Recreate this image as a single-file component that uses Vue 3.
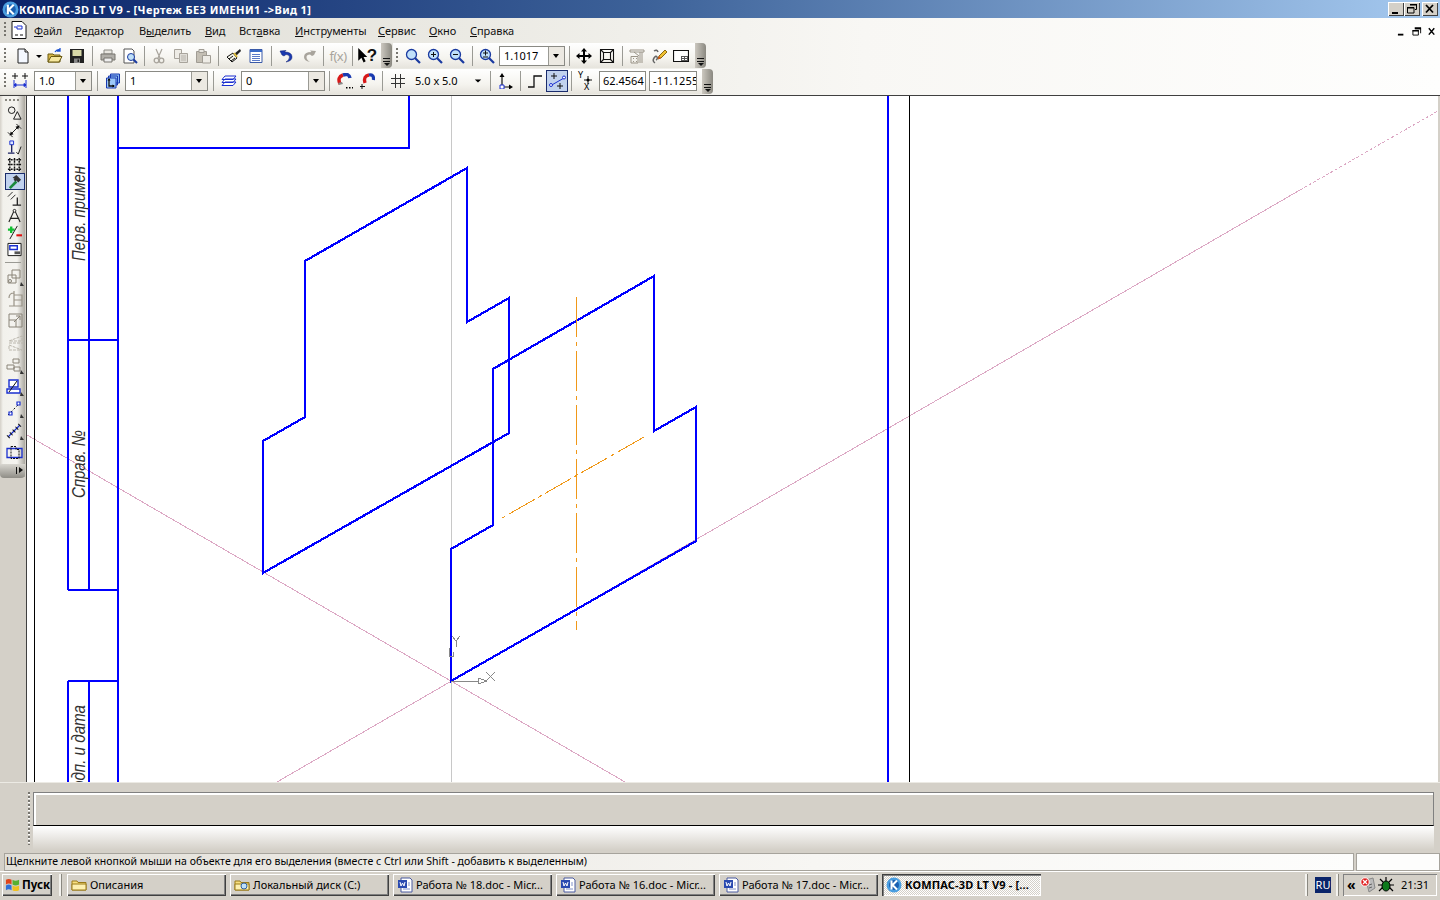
<script setup>
const menu = [
  ['', 'Ф', 'айл', 'm1'], ['', 'Р', 'едактор', 'm2'], ['В', 'ы', 'делить', 'm3'], ['', 'В', 'ид', 'm4'],
  ['Вст', 'а', 'вка', 'm5'], ['', 'И', 'нструменты', 'm6'], ['', 'С', 'ервис', 'm7'], ['', 'О', 'кно', 'm8'], ['', 'С', 'правка', 'm9']
]
const docs = ['Работа № 18.doc - Micr...', 'Работа № 16.doc - Micr...', 'Работа № 17.doc - Micr...']
</script>

<template>
  <div class="app">
    <header class="title">
      <svg class="logo" viewBox="0 0 16 16"><circle cx="8" cy="8" r="7.500" fill="#4a9ee0"/><circle cx="8" cy="8" r="5" fill="#1a5fb0"/><path d="M5.500 3.500v9M11 3.500 6.500 8l4.500 4.500" stroke="#fff" stroke-width="2" fill="none"/></svg>
      <span class="title-text">КОМПАС-3D LT V9 - [Чертеж БЕЗ ИМЕНИ1 -&gt;Вид 1]</span>
      <div class="win-btns">
        <button class="wb"><svg viewBox="0 0 14 12"><path d="M3 9h6v2H3z"/></svg></button>
        <button class="wb"><svg viewBox="0 0 14 12"><path d="M5 1.500h6.500v5H10M2.500 4.500H9v5.500H2.500z" fill="none" stroke="#000"/><path d="M5 1h7v1.500H5zM2 4h7v1.500H2z"/></svg></button>
        <button class="wb wb-gap"><svg viewBox="0 0 14 12"><path d="m3 2 7 7.500M10 2 3 9.500" stroke="#000" stroke-width="1.800"/></svg></button>
      </div>
    </header>

    <div class="dock">
      <div class="menubar">
        <i class="grip grip-menu"></i>
        <svg class="doc-ic" viewBox="0 0 16 18"><path d="M1 .5h10l4 4v13H1z" fill="#fff" stroke="#111"/><path d="M3 6h3v2h5M6 5h5v3" fill="none" stroke="#1a2fd0"/><path d="M4 14h3M9 14h3" stroke="#111"/></svg>
        <span v-for="m in menu" :key="m[3]" class="menu-item" :class="m[3]">{{ m[0] }}<u>{{ m[1] }}</u>{{ m[2] }}</span>
        <div class="mdi-btns">
          <svg viewBox="0 0 44 12"><path d="M1 9h6v2H1z"/><path d="M20 3.500h6v5M17.500 5.500h6v5h-6z" fill="none" stroke="#000"/><path d="M19.500 2h7v2h-7zM17 5h7v1.500h-7z"/><path d="m35 3 6 7M41 3l-6 7" stroke="#000" stroke-width="1.600"/></svg>
        </div>
      </div>

      <div class="row row1">
        <div class="bar bar-a">
          <i class="grip"></i>
          <span class="spc3"></span>
          <span class="ic"><svg viewBox="0 0 16 16"><path d="M3 1h7l3 3v11H3z" fill="#f4f8ff" stroke="#222"/><path d="M10 1v3h3" fill="#ddd" stroke="#222"/></svg></span>
          <span class="mini"><svg viewBox="0 0 10 16"><path d="m2 7 3 3 3-3z"/></svg></span>
          <span class="ic"><svg viewBox="0 0 16 16"><path d="M1 6h5l1 1h6v7H1z" fill="#d8b848" stroke="#6a5a10"/><path d="M1 14 4 8.500h11L12 14z" fill="#f6e8a0" stroke="#6a5a10"/><path d="M8 4q2-3 5-2M13 0v3h-3" fill="none" stroke="#1a50d0" stroke-width="1.300"/></svg></span>
          <span class="ic"><svg viewBox="0 0 16 16"><path d="M1 1h14v14H1z" fill="#222"/><path d="M3.500 2h9v6h-9z" fill="#d8d8a8"/><path d="M5 10.500h6V15H5z" fill="#888"/><path d="M8.500 11.500h1.500v2.500H8.500z" fill="#222"/></svg></span>
          <i class="sep s9"></i>
          <span class="ic gray"><svg viewBox="0 0 16 16"><path d="M4 2h8v4H4z" fill="#e8e6e0" stroke="#8a8a84"/><path d="M1 6h14v6H1z" fill="#b0aea8" stroke="#77756f"/><path d="M4 10h8v4H4z" fill="#eee" stroke="#77756f"/></svg></span>
          <span class="ic"><svg viewBox="0 0 16 16"><path d="M2 1h8l2 2v12H2z" fill="#fff" stroke="#555"/><circle cx="9" cy="9" r="3.500" fill="#bfe0f8" stroke="#1a3aa0"/><path d="m11.500 11.500 3.500 3.500" stroke="#1a3aa0" stroke-width="2"/></svg></span>
          <i class="sep s7"></i>
          <span class="ic"><svg viewBox="0 0 16 16"><path d="M5 1l4 9M11 1 7 10" stroke="#a8a49c" fill="none" stroke-width="1.200"/><circle cx="5.500" cy="12.500" r="2.300" fill="none" stroke="#a8a49c" stroke-width="1.300"/><circle cx="10.500" cy="12.500" r="2.300" fill="none" stroke="#a8a49c" stroke-width="1.300"/></svg></span>
          <span class="ic"><svg viewBox="0 0 16 16"><path d="M1.500 1.500h7v9h-7z" fill="#eeece6" stroke="#a8a49c"/><path d="M6.500 5.500h8v9h-8z" fill="#e0ded8" stroke="#a8a49c"/><path d="M8 8h5M8 10h5M8 12h5" stroke="#b8b4ac"/></svg></span>
          <span class="ic"><svg viewBox="0 0 16 16"><path d="M1.500 3.500h10v11h-10z" fill="#c4bfb4" stroke="#a09c94"/><path d="M4 1.500h5v3H4z" fill="#e8e6e0" stroke="#a09c94"/><path d="M7.500 7.500h8v7.500h-8z" fill="#eeece6" stroke="#a09c94"/></svg></span>
          <i class="sep s9"></i>
          <span class="ic"><svg viewBox="0 0 16 16"><path d="m1 9 6-4 4 5-5 4z" fill="#f4f4e8" stroke="#111"/><path d="m3 11 4-3M5 13l4-3" stroke="#111"/><path d="m8 6 6-5 1 2-5 5z" fill="#222"/><path d="m8 5 3 4" stroke="#e0c040" stroke-width="2"/></svg></span>
          <span class="ic"><svg viewBox="0 0 16 16"><path d="M2 1.500h12v13H2z" fill="#fff" stroke="#3a5aa8"/><path d="M2 2h12v2H2z" fill="#3a6ac8"/><path d="M4 6.500h8M4 8.500h8M4 10.500h8M4 12.500h8" stroke="#5a7ac8"/></svg></span>
          <i class="sep s9"></i>
          <span class="ic"><svg viewBox="0 0 16 16"><path d="M3 7 1 3l6-.500-1.500 1.500Q13 4 13 9q0 4-6 5 3.500-2 3.500-5 0-2.500-3.500-2.500L5 8z" fill="#1a3ab0" stroke="#0a1a70" stroke-width=".5"/></svg></span>
          <span class="ic"><svg viewBox="0 0 16 16"><path d="m13 7 2-4-6-.500 1.500 1.500Q3 4 3 9q0 4 6 5-3.500-2-3.500-5 0-2.500 3.500-2.500L11 8z" fill="#a8a49c"/></svg></span>
          <i class="sep s7"></i>
          <span class="ic fx">f(x)</span>
          <i class="sep s7"></i>
          <span class="ic help"><svg viewBox="0 0 10 16"><path d="M1 1v12l3-3 2 4.500 2-1-2-4h3.500z" fill="#000"/></svg><b>?</b></span>
        </div>
        <i class="chev"><b></b></i>

        <div class="bar bar-b">
          <i class="grip"></i>
          <span class="spc3"></span>
          <span class="ic"><svg viewBox="0 0 16 16"><circle cx="6.500" cy="6.500" r="5" fill="#c0e0fa" stroke="#1a3aa0" stroke-width="1.300"/><path d="m10 10 5 5" stroke="#1a3aa0" stroke-width="2.200"/></svg></span>
          <span class="ic"><svg viewBox="0 0 16 16"><circle cx="6.500" cy="6.500" r="5" fill="#c0e0fa" stroke="#1a3aa0" stroke-width="1.300"/><path d="M4 6.500h5M6.500 4v5" stroke="#111"/><path d="m10 10 5 5" stroke="#1a3aa0" stroke-width="2.200"/></svg></span>
          <span class="ic"><svg viewBox="0 0 16 16"><circle cx="6.500" cy="6.500" r="5" fill="#c0e0fa" stroke="#1a3aa0" stroke-width="1.300"/><path d="M4 6.500h5" stroke="#111"/><path d="m10 10 5 5" stroke="#1a3aa0" stroke-width="2.200"/></svg></span>
          <i class="sep"></i>
          <span class="ic"><svg viewBox="0 0 16 16"><circle cx="6.500" cy="6.500" r="5" fill="#c0e0fa" stroke="#1a3aa0" stroke-width="1.300"/><path d="M4 5h5M6.500 2.500v5M4 9h5" stroke="#111"/><path d="m10 10 5 5" stroke="#1a3aa0" stroke-width="2.200"/></svg></span>
          <span class="spc1"></span>
          <div class="combo c66"><span>1.1017</span><em></em></div>
          <i class="sep"></i>
          <span class="ic"><svg viewBox="0 0 16 16"><path d="M8 0 5 3.500h2V7H3.500V5L0 8l3.500 3V9H7v3.500H5L8 16l3-3.500H9V9h3.500v2L16 8l-3.500-3v2H9V3.500h2z"/></svg></span>
          <span class="spc1"></span>
          <span class="ic"><svg viewBox="0 0 16 16"><path d="M1.500 1.500h13v13h-13zM4.500 4.500h7v7h-7zM1.500 1.500l3 3M14.500 1.500l-3 3M1.500 14.500l3-3M14.500 14.500l-3-3" fill="none" stroke="#111" stroke-width="1.100"/></svg></span>
          <i class="sep"></i>
          <span class="ic"><svg viewBox="0 0 16 16"><path d="M1 2h14v2H1zM11 4v11M13 4v11M2 8.500h7v6.500H2z" fill="none" stroke="#9a9488"/><path d="M4 10h1v1H4zM7 10h1v1H7zM4 13h1v1H4zM7 13h1v1H7z" fill="#9a9488"/><path d="m5 4 5 4" stroke="#9a9488"/></svg></span>
          <span class="ic"><svg viewBox="0 0 16 16"><path d="M4 15q-3-2-1-5t3-1-1 3M3 3q3-2 4 1" fill="none" stroke="#666" stroke-width="1.500"/><path d="m7 11 1-3 6-6 2 2-6 6z" fill="#f0c030" stroke="#8a6a10"/><path d="m7 11 1-3 2 2z" fill="#e05020"/></svg></span>
          <span class="ic"><svg viewBox="0 0 16 16"><path d="M.5 2.500h15v11H.5z" fill="#fff" stroke="#111" stroke-width="1.200"/><path d="M8 8h7v5H8z" fill="#555"/><path d="M9 9h2v1H9zM12 9h2v1h-2zM9 11h2v1H9zM12 11h2v1h-2z" fill="#fff"/></svg></span>
        </div>
        <i class="chev"><b></b></i>
      </div>

      <div class="row row2">
        <div class="bar bar-c">
          <i class="grip"></i>
          <span class="ic"><svg viewBox="0 0 16 16"><path d="M3 0v6M0 3h6M13 0v6M10 3h6" stroke="#111"/><path d="M2 7v8M14 7v8M2 12h12M2 12l2-1.500v3zM14 12l-2-1.500v3z" stroke="#1a2fd0" fill="#1a2fd0"/></svg></span>
          <span class="spc3"></span>
          <div class="combo c58"><span>1.0</span><em></em></div>
          <i class="sep s10"></i>
          <span class="ic"><svg viewBox="0 0 16 16"><path d="M5.500 1h9v9h-9zM3.500 3h9v9h-9z" fill="#88b8f0" stroke="#1a3ab0"/><path d="M1.500 5h9.500v10H1.500z" fill="#9cc8f8" stroke="#1a3ab0"/><path d="M4 6.500V13h5" fill="none" stroke="#111" stroke-width="1.300"/><path d="m4 5 1.500 2.500h-3zM10 13l-2.500-1.500v3z"/></svg></span>
          <span class="spc1"></span>
          <div class="combo c83"><span>1</span><em></em></div>
          <i class="sep s10"></i>
          <span class="ic"><svg viewBox="0 0 16 16"><path d="M4 3h11l-3 3.500H1zM4 6h11l-3 3.500H1zM4 9h11l-3 3.500H1z" fill="#fff" stroke="#1a2fd0"/></svg></span>
          <span class="spc1"></span>
          <div class="combo c84"><span>0</span><em></em></div>
          <i class="sep s9"></i>
          <span class="ic"><svg viewBox="0 0 16 16"><path d="M3 11Q0 4 6 2" fill="none" stroke="#d81818" stroke-width="3.500"/><path d="M6 2q6-2 7 3" fill="none" stroke="#1a3ab0" stroke-width="3.500"/><path d="m1 10 4-1 1 2-4 1z" fill="#888"/><path d="M9 14h1.500v1.500H9zM12 14h1.500v1.500H12zM15 14h1v1.500h-1z"/></svg></span>
          <span class="ic"><svg viewBox="0 0 16 16"><path d="M6 10Q4 3 10 2" fill="none" stroke="#d81818" stroke-width="3.300"/><path d="M10 2q5-1 4.500 5" fill="none" stroke="#1a3ab0" stroke-width="3.300"/><path d="M3 11v5M1 13.500h5" stroke="#111"/></svg></span>
          <i class="sep s9"></i>
          <span class="ic"><svg viewBox="0 0 16 16"><path d="M5.500 1v14M10.500 1v14M1 5.500h14M1 10.500h14" stroke="#333"/></svg></span>
          <span class="grid-txt">5.0 x 5.0</span>
          <span class="arrow-only"><svg viewBox="0 0 10 10"><path d="m1 3 4 4 4-4z"/></svg></span>
          <i class="sep"></i>
          <span class="ic"><svg viewBox="0 0 16 16"><path d="M5 14V3M5 14h9" stroke="#111" stroke-width="1.200"/><path d="m5 0 2.500 4h-5zM16 14l-4-2.500v5z"/><path d="M3 12h4v4H3z" fill="#fff" stroke="#1a2fd0"/></svg></span>
          <i class="sep"></i>
          <span class="ic"><svg viewBox="0 0 16 16"><path d="M1 14h6V3h8" fill="none" stroke="#111" stroke-width="1.300"/></svg></span>
          <span class="ic active"><svg viewBox="0 0 18 18"><path d="M6 1v6M3 4h6M12 11v6M9 14h6" stroke="#111"/><path d="m2 14 14-8" stroke="#1a2fd0"/><circle cx="3" cy="13" r="1.500" fill="#fff" stroke="#1a2fd0"/><circle cx="16" cy="5.500" r="1.500" fill="#fff" stroke="#1a2fd0"/></svg></span>
          <i class="sep s7"></i>
          <span class="ic yx"><small>Y</small><svg viewBox="0 0 8 8"><path d="M4 0v8M0 4h8" stroke="#111"/><circle cx="4" cy="4" r="1.500"/></svg><small class="x">X</small></span>
          <span class="spc2"></span>
          <div class="field f47">62.4564</div>
          <span class="spc3"></span>
          <div class="field f48">-11.1255</div>
        </div>
        <i class="chev"><b></b></i>
      </div>
    </div>

    <main class="main">
      <aside class="side">
        <div class="side-bar">
          <i class="dots"></i>
          <span class="si"><svg viewBox="0 0 16 16"><circle cx="5" cy="4.500" r="3.500" fill="none" stroke="#111"/><path d="m11 6 4 8H7z" fill="none" stroke="#111"/></svg></span>
          <span class="si"><svg viewBox="0 0 16 16"><path d="m3 13 10-10M1 10l5 5M10 1l5 5" stroke="#111"/><path d="m3 13 1-4 3 3zM13 3l-1 4-3-3z"/></svg></span>
          <span class="si"><svg viewBox="0 0 16 16"><path d="M3 1h4v4H3z" fill="#dfe8ff" stroke="#1a2fd0"/><path d="M5 5v8M1 14h7" stroke="#1a2060" stroke-width="1.400"/><path d="m10 13 2 2 3-8" fill="none" stroke="#111"/></svg></span>
          <span class="si"><svg viewBox="0 0 16 16"><path d="M3 1v14M8 1v14M13 1v14M1 3h14M1 8h14M1 13h14" stroke="#111" stroke-dasharray="2 1" stroke-width="1.500"/></svg></span>
          <span class="si sel"><svg viewBox="0 0 16 16"><path d="m2 14 7-7 2 2-7 7z" fill="#1c8a3c"/><path d="m6 4 4-3 5 5-3 3-2-2-1 1-2-2 1-1z" fill="#333"/></svg></span>
          <span class="si"><svg viewBox="0 0 16 16"><path d="m1 6 5-5M4 9l5-5" stroke="#222"/><path d="M11 7v8M6 15h9" stroke="#222" stroke-width="1.400"/></svg></span>
          <span class="si"><svg viewBox="0 0 16 16"><path d="M8 2 2 15M8 2l6 13M3 11h10" fill="none" stroke="#222" stroke-width="1.200"/><circle cx="8" cy="3" r="1.500" fill="#fff" stroke="#222"/></svg></span>
          <span class="si"><svg viewBox="0 0 16 16"><path d="M1 5h7M4.500 1.500v7" stroke="#10c030" stroke-width="2.500"/><path d="M10 11h6" stroke="#e01010" stroke-width="2.200"/><path d="m3 15 8-14" stroke="#111"/></svg></span>
          <span class="si"><svg viewBox="0 0 16 16"><path d="M1 1.500h14v13H1z" fill="#fff" stroke="#111"/><path d="M3 4h8v4H3z" fill="#fff" stroke="#1a2fd0" stroke-width="1.500"/><path d="M8 10h6v3H8z" fill="#555"/></svg></span>
          <i class="side-line"></i>
          <span class="si tall"><svg viewBox="0 0 18 18"><path d="M6 2h8v8H6zM2 7h8v8H2z" fill="none" stroke="#8a8478"/><circle cx="4" cy="13" r="1.500" fill="none" stroke="#8a8478"/><path d="m15 14 3 4h-4z" fill="#333"/></svg></span>
          <span class="si tall"><svg viewBox="0 0 18 18"><path d="M8 5h8v11H8zM8 10h8M3 16h13M3 8q0-5 5-5M8 1v4" fill="none" stroke="#9a9488" stroke-width="1.200"/></svg></span>
          <span class="si tall"><svg viewBox="0 0 18 18"><path d="M3 2h13v13H3zM3 8h7v7M8 10l6-6M10 4h4v4" fill="none" stroke="#8a8478"/></svg></span>
          <span class="si tall"><svg viewBox="0 0 18 18"><path d="M3 9h14M3 7l13-5v5zM3 11l13 5H3z" fill="none" stroke="#bab6ac" stroke-dasharray="3 1"/></svg></span>
          <span class="si tall"><svg viewBox="0 0 18 18"><path d="M7 3h6v4H7zM1 9h7v4H1zM8 11h6v4H8z" fill="none" stroke="#8a8478"/><path d="m15 14 3 4h-4z" fill="#333"/></svg></span>
          <span class="si tall"><svg viewBox="0 0 18 18"><path d="M3 2h9v7H3zM1 11h13v4H1z" fill="#fff" stroke="#1a2fd0" stroke-width="1.400"/><path d="m3 14 8-11" stroke="#111"/><path d="m15 14 3 4h-4z" fill="#333"/></svg></span>
          <span class="si tall"><svg viewBox="0 0 18 18"><path d="m2 15 12-12" stroke="#111" stroke-dasharray="2 2"/><path d="M3 12h3v3H3zM11 2h3v3h-3z" fill="#fff" stroke="#1a2fd0" stroke-width="1.200"/><path d="m15 14 3 4h-4z" fill="#333"/></svg></span>
          <span class="si tall"><svg viewBox="0 0 18 18"><path d="m2 15 12-12" stroke="#1a2fd0" stroke-width="1.300"/><path d="m2 15 12-12" stroke="#111" stroke-dasharray="1 3" stroke-width="4"/><path d="m15 14 3 4h-4z" fill="#333"/></svg></span>
          <span class="si tall"><svg viewBox="0 0 18 18"><path d="M1 4.500h15v9H1z" fill="none" stroke="#1a2fd0" stroke-width="1.300"/><path d="M5 2.500h5v3h3v9H5z" fill="none" stroke="#111" stroke-dasharray="2 1"/></svg></span>
          <div class="side-end"><i class="side-arrow"></i></div>
        </div>
      </aside>

      <section class="canvas">
        <svg class="drawing" viewBox="27 96 1413 686" shape-rendering="crispEdges">
          <g stroke="#dca8c4" fill="none" stroke-width="1">
            <path d="M27 435 625 782"/>
            <path d="M277 782 1300 190"/>
            <path d="M1300 190 1438 111" stroke-dasharray="3 2"/>
          </g>
          <path d="M451.500 96v686" stroke="#c8c8c8"/>
          <path d="M34.500 96v686M909.500 96v686" stroke="#000"/>
          <g fill="none" stroke="#0000ff" stroke-width="2">
            <path d="M68 96v494M89 96v494M118 96v686M68 340h50M68 590h50M68 681v101M89 681v101M68 681h50M118 148h291V96M888 96v686"/>
          </g>
          <g fill="none" stroke="#0000ff" stroke-width="2.300">
            <path d="M467 168 305 261v156l-42 24v132l246-140V298l-42 24z"/>
            <path d="M654 276 493 369v156l-42 24v132l245-140V407l-42 24z"/>
          </g>
          <g fill="none" stroke="#f09818" stroke-width="1">
            <path d="M576.500 297v333" stroke-dasharray="40 5 4 5"/>
            <path d="M644 437 502 518" stroke-dasharray="30 4 4 4"/>
          </g>
          <g stroke="#888" fill="none">
            <path d="M452 636l4 5 4-5M456 641v6M449 648v8h4v-4"/>
            <path d="M451 681h27M478 678v6l9-3zM486 672l9 9M495 672l-9 9"/>
          </g>
          <g class="gost">
            <text transform="translate(85 261) rotate(-90)" textLength="95" lengthAdjust="spacingAndGlyphs">Перв. примен</text>
            <text transform="translate(85 498) rotate(-90)" textLength="68" lengthAdjust="spacingAndGlyphs">Справ. №</text>
            <text transform="translate(85 800) rotate(-90)" textLength="95" lengthAdjust="spacingAndGlyphs">Подп. и дата</text>
          </g>
        </svg>
      </section>
    </main>

    <section class="command">
      <i class="cmd-grip"></i>
      <div class="cmd-body">
        <div class="cmd-box"></div>
        <div class="cmd-foot"></div>
      </div>
    </section>

    <footer class="status">
      <div class="st-field st-main">Щелкните левой кнопкой мыши на объекте для его выделения (вместе с Ctrl или Shift - добавить к выделенным)</div>
      <div class="st-field st-side"></div>
    </footer>

    <nav class="taskbar">
      <button class="start">
        <svg viewBox="0 0 16 16"><path d="M1 3q3-2 6 0v5q-3-2-6 0z" fill="#e0441c"/><path d="M8 3q3 2 7 0v5q-4 2-7 0z" fill="#58b030"/><path d="M1 9q3-2 6 0v5q-3-2-6 0z" fill="#3070d8"/><path d="M8 9q3 2 7 0v5q-4 2-7 0z" fill="#f0c020"/></svg>
        <b>Пуск</b>
      </button>
      <i class="handle"></i>
      <button class="tb">
        <svg viewBox="0 0 16 16"><path d="M1 4h5l1 1.500h8V13H1z" fill="#f8e080" stroke="#9a7a18"/><path d="M1 13V7h14v6z" fill="#fdf0b0" stroke="#9a7a18"/></svg>
        <span>Описания</span>
      </button>
      <button class="tb">
        <svg viewBox="0 0 16 16"><path d="M1 4h5l1 1.500h8V13H1z" fill="#f8e080" stroke="#9a7a18"/><path d="M1 13V7h14v6z" fill="#fdf0b0" stroke="#9a7a18"/><circle cx="10" cy="9" r="3" fill="#bfe0f8" stroke="#3060a0"/></svg>
        <span>Локальный диск (C:)</span>
      </button>
      <button v-for="d in docs" :key="d" class="tb">
        <svg viewBox="0 0 16 16"><path d="M4 1h9l2 2v12H4z" fill="#fff" stroke="#4a5aa0"/><path d="M1 3h9v8H1z" fill="#2a4ab0"/><path d="m3 5 1 4 1.500-3L7 9l1-4" fill="none" stroke="#fff"/><path d="M11 6h2M11 8h2M6 12h7" stroke="#8090c8"/></svg>
        <span>{{ d }}</span>
      </button>
      <button class="tb tb-active">
        <svg viewBox="0 0 16 16"><circle cx="8" cy="8" r="7.500" fill="#4a9ee0"/><circle cx="8" cy="8" r="5" fill="#1a5fb0"/><path d="M5.500 3.500v9M11 3.500 6.500 8l4.500 4.500" stroke="#fff" stroke-width="2" fill="none"/></svg>
        <span>КОМПАС-3D LT V9 - [...</span>
      </button>
      <div class="tb-right">
        <i class="handle"></i>
        <span class="lang">RU</span>
        <i class="handle h2"></i>
        <div class="tray">
          <span class="chevs">«</span>
          <svg class="tr-ic" viewBox="0 0 16 16"><path d="m6 3 7-2 2 10-6 4z" fill="#bbb" stroke="#888"/><path d="m9 8 3-1M9 11l3-1" stroke="#666"/><circle cx="5" cy="5" r="4.200" fill="#e01c1c" stroke="#fff"/><path d="m3 3 4 4M7 3 3 7" stroke="#fff" stroke-width="1.300"/></svg>
          <svg class="tr-ic" viewBox="0 0 16 16"><path d="M2 2l4 4M14 2l-4 4M0 8h16M1 14l4-4M15 14l-4-4M8 0v4" stroke="#000" stroke-width="1.200"/><ellipse cx="8" cy="9" rx="4" ry="5" fill="#0e7a1c" stroke="#000"/></svg>
          <span class="clock">21:31</span>
        </div>
      </div>
    </nav>
  </div>
</template>

<style scoped>
.app {
  width: 1440px;
  height: 900px;
  overflow: hidden;
  display: flex;
  flex-direction: column;
  background: #d4d0c8;
  font: 11px "Noto Sans", "Liberation Sans", sans-serif;
  color: #000;
}
button { font: inherit; color: inherit; padding: 0; }
i, em { display: block; font-style: normal; }

.title {
  height: 18px;
  display: flex;
  align-items: center;
  background: linear-gradient(90deg, #0a246a 0%, #3d6299 45%, #a6caf0 100%);
  color: #fff;
  flex: none;
}
.logo { width: 17px; height: 17px; margin-left: 2px; flex: none; }
.title-text { font-weight: 700; font-size: 11px; letter-spacing: .38px; white-space: nowrap; }
.win-btns { margin-left: auto; margin-right: 2px; display: flex; }
.wb {
  width: 16px;
  height: 14px;
  background: #d4d0c8;
  border: 0;
  box-shadow: inset 1px 1px 0 #fff, inset -1px -1px 0 #404040;
  display: flex;
  align-items: center;
  justify-content: center;
}
.wb svg { width: 14px; height: 12px; }
.wb-gap { margin-left: 2px; }

.dock {
  height: 78px;
  flex: none;
  background: linear-gradient(90deg, #dedcd5 0, #ecebe5 35%, #f8f7f4 60%, #fefefd 100%);
  box-shadow: inset 0 -1px 0 #404040;
}
.menubar { height: 24px; display: flex; align-items: center; white-space: nowrap; }
.grip {
  width: 2px;
  height: 16px;
  margin-left: 4px;
  flex: none;
  background: repeating-linear-gradient(#77756f 0 2px, transparent 2px 4px);
}
.grip-menu { margin-right: 4px; }
.doc-ic { width: 16px; height: 18px; margin-left: 1px; margin-right: 7px; flex: none; }
.menu-item { font-size: 11px; letter-spacing: -.06px; color: #111; flex: none; }
.m1 { width: 41px; } .m2 { width: 64px; } .m3 { width: 66px; } .m4 { width: 34px; }
.m5 { width: 56px; } .m6 { width: 83px; } .m7 { width: 51px; } .m8 { width: 41px; }
.mdi-btns { margin-left: auto; margin-right: 3px; width: 40px; height: 12px; margin-top: 2px; }
.mdi-btns svg { width: 40px; height: 12px; display: block; }

.row { display: flex; align-items: stretch; }
.row1 { height: 26px; padding-top: 1px; box-sizing: border-box; }
.row2 { height: 27px; padding-top: 1px; padding-bottom: 1px; box-sizing: border-box; }
.bar {
  display: flex;
  align-items: center;
  background: linear-gradient(#fff, #f5f4ef 60%, #e6e4dd);
  box-sizing: border-box;
  height: 25px;
}
.bar-a { width: 381px; }
.bar-b { width: 302px; margin-left: 1px; }
.bar-c { width: 702px; padding-bottom: 2px; }
.bar-a .grip, .bar-c .grip { margin-left: 4px; margin-right: 3px; }
.bar-b .grip { margin-left: 3px; margin-right: 1px; }
.chev {
  width: 11px;
  flex: none;
  height: 25px;
  border-radius: 0 4px 4px 0;
  background: linear-gradient(90deg, #ccc8c0, #8a8880);
  position: relative;
}
.chev b {
  position: absolute;
  left: 2px;
  bottom: 3px;
  width: 7px;
  height: 7px;
  background: linear-gradient(#111 0 1px, transparent 1px 3px, #111 3px 4px, transparent 4px);
}
.chev b::after {
  content: "";
  position: absolute;
  left: 1px;
  top: 5px;
  border: 3px solid transparent;
  border-top: 3px solid #111;
  border-bottom: 0;
  width: 0;
  height: 0;
}
.spc1 { width: 1px; flex: none; }
.spc2 { width: 2px; flex: none; }
.spc3 { width: 3px; flex: none; }
.ic {
  width: 22px;
  height: 22px;
  flex: none;
  display: flex;
  align-items: center;
  justify-content: center;
  box-sizing: border-box;
}
.ic svg { width: 16px; height: 16px; display: block; }
.mini { width: 10px; height: 16px; flex: none; }
.mini svg { width: 10px; height: 16px; display: block; }
.sep {
  width: 8px;
  height: 20px;
  flex: none;
  background: linear-gradient(#9a9a94, #9a9a94) center / 1px 100% no-repeat;
}
.s7 { width: 7px; } .s9 { width: 9px; } .s10 { width: 10px; }
.fx { color: #a8a49c; font-size: 13px; letter-spacing: -.5px; }
.help svg { width: 11px; height: 17px; }
.help b { font-size: 17px; line-height: 16px; color: #111; margin-left: -1px; font-family: "Liberation Sans", sans-serif; }

.combo {
  height: 20px;
  box-sizing: border-box;
  border: 1px solid #8a8a84;
  background: #fff;
  display: flex;
  flex: none;
  align-items: center;
  font-size: 11px;
}
.combo span { flex: 1; padding-left: 4px; }
.combo em {
  width: 15px;
  height: 18px;
  background: #ece9e2;
  border-left: 1px solid #9a9a94;
  position: relative;
}
.combo em::after {
  content: "";
  position: absolute;
  left: 4px;
  top: 7px;
  border: 3.500px solid transparent;
  border-top: 4px solid #000;
  border-bottom: 0;
}
.c58 { width: 58px; } .c66 { width: 66px; } .c83 { width: 83px; } .c84 { width: 84px; }
.grid-txt { width: 61px; box-sizing: border-box; padding-left: 6px; flex: none; font-size: 11px; white-space: nowrap; }
.arrow-only { width: 16px; flex: none; display: flex; justify-content: center; }
.arrow-only svg { width: 8px; height: 8px; }
.active { background: #c1d2ee; border: 1px solid #1a2c6c; }
.active svg { width: 18px; height: 18px; }
.yx { position: relative; }
.yx svg { width: 8px; height: 8px; margin-left: 3px; margin-top: -2px; }
.yx small { font-size: 9px; position: absolute; left: 3px; top: 0; line-height: 10px; }
.yx small.x { left: 9px; top: 12px; }
.field {
  height: 20px;
  line-height: 18px;
  box-sizing: border-box;
  border: 1px solid #8a8a84;
  background: #fff;
  flex: none;
  overflow: hidden;
  white-space: nowrap;
  padding-left: 3px;
  font-size: 11px;
}
.f47 { width: 47px; } .f48 { width: 48px; letter-spacing: .15px; }

.main { flex: none; height: 686px; display: flex; }
.side { width: 27px; flex: none; background: #d4d0c8; border-right: 1px solid #404040; box-sizing: border-box; }
.side-bar {
  width: 25px;
  height: 381px;
  display: flex;
  flex-direction: column;
  align-items: center;
  background: linear-gradient(90deg, #d4d0c8 0, #f2f1ec 3px, #f4f3ef 17px, #aaa79f 25px);
}
.dots {
  width: 16px;
  height: 2px;
  margin-top: 3px;
  margin-bottom: 4px;
  flex: none;
  background: repeating-linear-gradient(90deg, #8a8880 0 2px, transparent 2px 4px);
}
.si { width: 20px; height: 17px; display: flex; align-items: center; justify-content: center; flex: none; box-sizing: border-box; margin-left: 4px; }
.si svg { width: 15px; height: 15px; display: block; }
.si.tall { height: 22px; }
.si.tall svg { width: 18px; height: 18px; }
.sel { background: #c1d2ee; border: 1px solid #1a2c6c; }
.side-line { width: 16px; height: 1px; background: #9a9a94; margin: 4px 0 3px; flex: none; }
.side-end {
  margin-top: auto;
  height: 14px;
  width: 25px;
  background: linear-gradient(#d8d6d0, #8f8d86);
  border-radius: 0 0 4px 4px;
  flex: none;
  position: relative;
}
.side-arrow {
  position: absolute;
  left: 16px;
  top: 3px;
  width: 6px;
  height: 7px;
  background: linear-gradient(90deg, #111 0 1px, transparent 1px 2px);
}
.side-arrow::after {
  content: "";
  position: absolute;
  left: 3px;
  top: 0;
  border: 3.500px solid transparent;
  border-left: 4px solid #111;
  border-right: 0;
}
.canvas { flex: 1; background: #fff; overflow: hidden; border-right: 2px solid #d4d0c8; }
.drawing { display: block; width: 1413px; height: 686px; }
.gost text { font: italic 19px "Liberation Sans", sans-serif; fill: #333; }

.command { flex: none; height: 70px; display: flex; background: #d4d0c8; box-sizing: border-box; padding-top: 9px; border-top: 1px solid #eceae4; }
.cmd-grip {
  width: 2px;
  height: 53px;
  margin-left: 28px;
  flex: none;
  background: repeating-linear-gradient(#77756f 0 2px, #fff 2px 3px, transparent 3px 4px);
}
.cmd-body { width: 1401px; margin-left: 3px; flex: none; display: flex; flex-direction: column; }
.cmd-box {
  height: 34px;
  box-sizing: border-box;
  background: #d4d0c8;
  border: 1px solid #808080;
  border-bottom: 1px solid #000;
  box-shadow: inset 2px 2px 0 #fff;
}
.cmd-foot { height: 24px; background: linear-gradient(#fff, #d4d0c8); }

.status { flex: none; height: 19px; display: flex; padding: 1px 0 0 4px; box-sizing: border-box; gap: 2px; }
.st-field {
  height: 18px;
  line-height: 15px;
  box-sizing: border-box;
  border: 1px solid #a6a39c;
  white-space: nowrap;
  overflow: hidden;
}
.st-main { width: 1350px; background: linear-gradient(90deg, #e2dfd8, #f7f6f3 60%, #fdfdfc); padding-left: 1px; font-size: 10.500px; letter-spacing: .02px; }
.st-side { flex: 1; background: #fdfdfc; }

.taskbar {
  flex: none;
  height: 29px;
  display: flex;
  align-items: center;
  box-sizing: border-box;
  padding: 1px 0 4px 2px;
  background: #d4d0c8;
  border-top: 1px solid #fff;
}
.start, .tb {
  height: 22px;
  flex: none;
  display: flex;
  align-items: center;
  background: #d4d0c8;
  border: 0;
  box-shadow: inset 1px 1px 0 #fff, inset -1px -1px 0 #404040, inset -2px -2px 0 #808080;
  text-align: left;
}
.start { width: 50px; padding-left: 3px; gap: 2px; }
.start svg { width: 15px; height: 15px; }
.start b { font-size: 11.500px; }
.handle { width: 2px; height: 22px; background: #f4f3ef; box-shadow: 1px 0 0 #8a8880; margin: 0 6px 0 7px; flex: none; }
.tb { width: 159px; padding-left: 4px; gap: 3px; margin-right: 4px; white-space: nowrap; overflow: hidden; }
.tb svg { width: 16px; height: 16px; flex: none; }
.tb-active {
  font-weight: 700;
  background: repeating-conic-gradient(#fff 0 25%, #d4d0c8 0 50%) 0 0 / 2px 2px;
  box-shadow: inset 1px 1px 0 #404040, inset 2px 2px 0 #808080, inset -1px -1px 0 #fff;
}
.tb-active span { font-size: 11px; letter-spacing: .15px; }
.tb-right { margin-left: auto; display: flex; align-items: center; height: 24px; }
.tb-right .handle { margin: 0 8px 0 0; }
.tb-right .h2 { margin: 0 5px 0 5px; }
.lang { width: 16px; height: 16px; background: #0a246a; color: #fff; font-size: 11px; line-height: 16px; text-align: center; }
.tray {
  width: 94px;
  height: 22px;
  box-sizing: border-box;
  margin-right: 3px;
  display: flex;
  align-items: center;
  padding-left: 4px;
  box-shadow: inset 1px 1px 0 #808080, inset -1px -1px 0 #fff;
}
.chevs { font-size: 14px; font-weight: 700; width: 13px; line-height: 14px; }
.tr-ic { width: 16px; height: 16px; flex: none; margin-right: 2px; }
.clock { margin-left: 5px; font-size: 11px; }
</style>

<style>
html, body { margin: 0; background: #d4d0c8; }
</style>
